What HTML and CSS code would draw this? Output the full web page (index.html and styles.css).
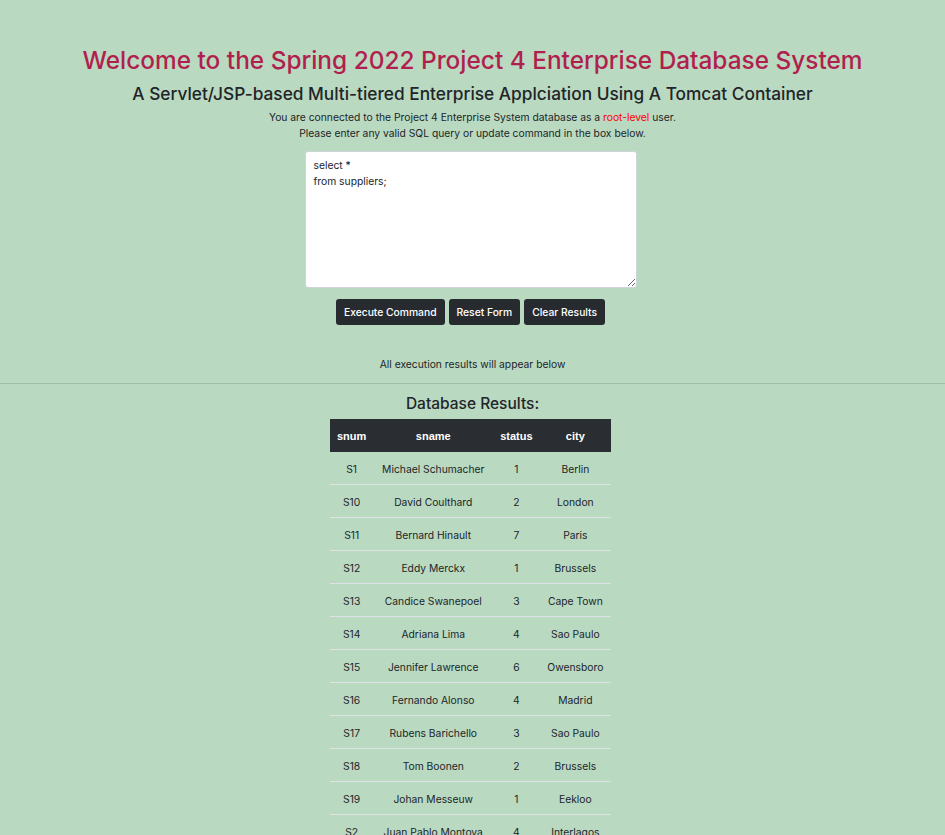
FILE: index.html
```html
<!DOCTYPE html>
<html lang="en">
<head>
<meta charset="utf-8">
<title>Project 4 Enterprise Database System</title>
<link rel="stylesheet" href="styles.css">
</head>
<body>
<header class="intro">
  <h1 class="title">Welcome to the Spring 2022 Project 4 Enterprise Database System</h1>
  <h2 class="subtitle">A Servlet/JSP-based Multi-tiered Enterprise Applciation Using A Tomcat Container</h2>
  <p class="note">You are connected to the Project 4 Enterprise System database as a <span class="role">root-level</span> user.<br>Please enter any valid SQL query or update command in the box below.</p>
</header>
<form class="query-form">
  <textarea class="query" rows="8" cols="50">select *
from suppliers;</textarea>
  <div class="actions">
    <button type="button" class="btn">Execute Command</button>
    <button type="reset" class="btn">Reset Form</button>
    <button type="button" class="btn">Clear Results</button>
  </div>
</form>
<p class="hint">All execution results will appear below</p>
<hr class="divider">
<section class="results">
  <h3 class="results-title">Database Results:</h3>
  <table class="grid">
    <thead>
      <tr><th>snum</th><th>sname</th><th>status</th><th>city</th></tr>
    </thead>
    <tbody>
      <tr><td>S1</td><td>Michael Schumacher</td><td>1</td><td>Berlin</td></tr>
      <tr><td>S10</td><td>David Coulthard</td><td>2</td><td>London</td></tr>
      <tr><td>S11</td><td>Bernard Hinault</td><td>7</td><td>Paris</td></tr>
      <tr><td>S12</td><td>Eddy Merckx</td><td>1</td><td>Brussels</td></tr>
      <tr><td>S13</td><td>Candice Swanepoel</td><td>3</td><td>Cape Town</td></tr>
      <tr><td>S14</td><td>Adriana Lima</td><td>4</td><td>Sao Paulo</td></tr>
      <tr><td>S15</td><td>Jennifer Lawrence</td><td>6</td><td>Owensboro</td></tr>
      <tr><td>S16</td><td>Fernando Alonso</td><td>4</td><td>Madrid</td></tr>
      <tr><td>S17</td><td>Rubens Barichello</td><td>3</td><td>Sao Paulo</td></tr>
      <tr><td>S18</td><td>Tom Boonen</td><td>2</td><td>Brussels</td></tr>
      <tr><td>S19</td><td>Johan Messeuw</td><td>1</td><td>Eekloo</td></tr>
      <tr><td>S2</td><td>Juan Pablo Montoya</td><td>4</td><td>Interlagos</td></tr>
    </tbody>
  </table>
</section>
</body>
</html>
```

FILE: styles.css
```css
html, body {
  margin: 0;
  padding: 0;
}
body {
  background: #bad9c1;
  color: #212529;
  font-family: Inter, "Liberation Sans", Arial, sans-serif;
  font-size: 10.3px;
  text-align: center;
}
.intro {
  padding-top: 45px;
}
.title {
  margin: 0;
  font-size: 24.4px;
  font-weight: 500;
  line-height: 31px;
  color: #b01f4d;
}
.subtitle {
  margin: 7px 0 0;
  font-size: 17.3px;
  font-weight: 500;
  line-height: 22px;
  color: #212529;
}
.note {
  margin: 4px 0 0;
  line-height: 16px;
}
.role {
  color: #f00;
}
.query-form {
  display: flex;
  flex-direction: column;
  align-items: center;
  margin-top: 10px;
}
.query {
  box-sizing: border-box;
  width: 332px;
  height: 137px;
  margin: 0 4px 0 0;
  padding: 5px 8px;
  border: 1px solid #ced4da;
  border-radius: 3px;
  background: #fff;
  color: #212529;
  font-family: Inter, "Liberation Sans", Arial, sans-serif;
  font-size: 10.3px;
  line-height: 16px;
}
.actions {
  display: flex;
  gap: 4px;
  margin: 11px 4px 0 0;
}
.btn {
  height: 26px;
  padding: 0 8px;
  border: none;
  border-radius: 3px;
  background: #272b30;
  color: #fff;
  font-family: Inter, "Liberation Sans", Arial, sans-serif;
  font-size: 10.3px;
  font-weight: 500;
}
.hint {
  margin: 31px 0 0;
  line-height: 16px;
}
.divider {
  margin: 11px 0 0;
  border: 0;
  border-top: 1px solid #9dbfa5;
}
.results {
  display: flex;
  flex-direction: column;
  align-items: center;
}
.results-title {
  margin: 10px 0 6px;
  font-size: 15.5px;
  font-weight: 500;
  line-height: 19px;
}
.grid {
  border-collapse: collapse;
  width: 281px;
  margin-right: 4px;
  white-space: nowrap;
}
.grid th {
  height: 33px;
  padding: 0 6px;
  background: #2a2e33;
  color: #fff;
  font-family: "Liberation Sans", Arial, sans-serif;
  font-weight: 700;
  font-size: 11px;
}
.grid td {
  height: 31px;
  padding: 1px 6px 0;
  border-bottom: 1px solid #dee2e6;
  font-size: 10.3px;
}
```
